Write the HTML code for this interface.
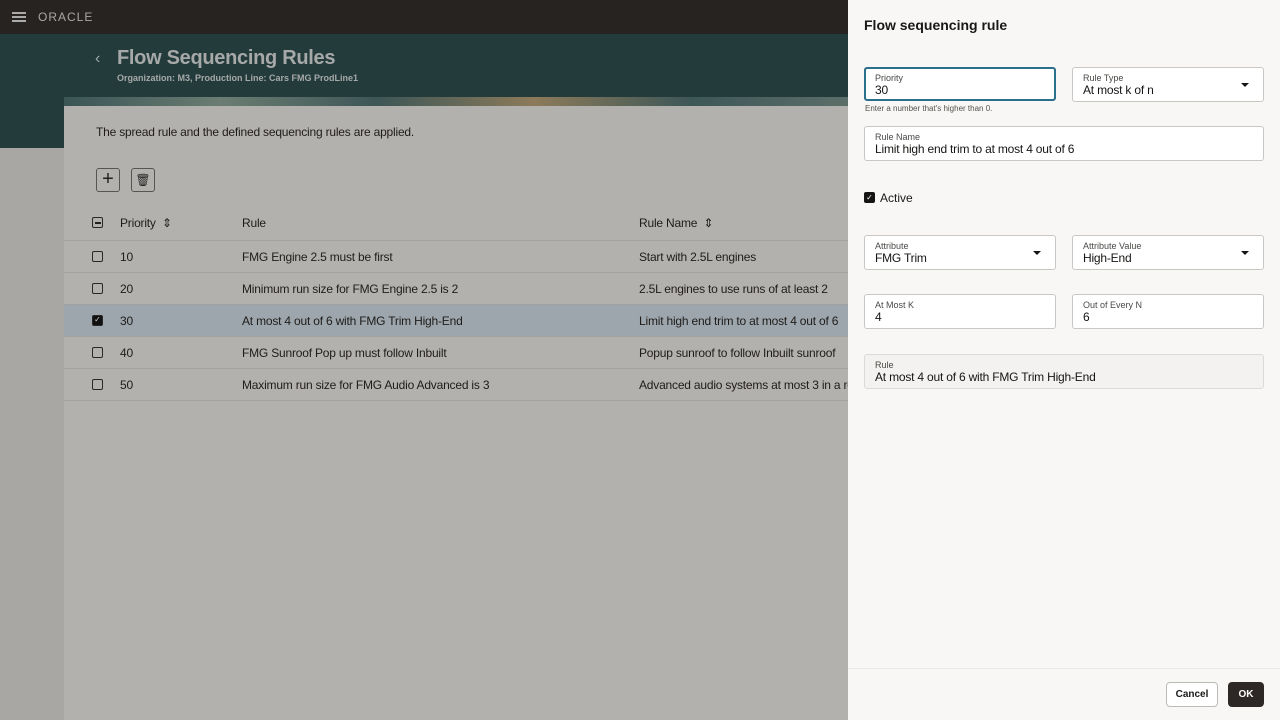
<!DOCTYPE html>
<html><head><meta charset="utf-8"><style>
*{box-sizing:border-box;margin:0;padding:0}
body{width:1280px;height:720px;overflow:hidden;font-family:"Liberation Sans",sans-serif;background:#a9a7a4;position:relative;color:#1a1816}
.top{position:absolute;left:0;top:0;width:848px;height:34px;background:#272320}
.band{position:absolute;left:0;top:34px;width:848px;height:114px;background:#243b3c}
.card{position:absolute;left:64px;top:106px;width:784px;height:614px;background:#b3b1ae}
.deco{position:absolute;left:64px;top:97px;width:784px;height:9px;background:linear-gradient(90deg,#3a5555,#6b7d72 20%,#3d5656 40%,#8c7a5a 60%,#3d5757 80%,#5c6e68)}
.t{position:absolute;font-size:12px;letter-spacing:-0.2px;color:#1f1c1a;white-space:nowrap}
.row{position:absolute;left:64px;width:784px;height:32px;border-top:1px solid #a3a19e}
.cb{position:absolute;width:11px;height:11px;border:1.5px solid #2a2725;border-radius:2px}
.panel{position:absolute;left:848px;top:0;width:432px;height:720px;background:#f8f7f5}
.f{position:absolute;background:#fff;border:1px solid #c9c7c4;border-radius:3px}
.f .l{position:absolute;left:10px;top:5px;font-size:9px;color:#4b4845}
.f .v{position:absolute;left:10px;top:15px;font-size:12px;letter-spacing:-0.2px;color:#161513}
.f .a{position:absolute;right:14px;top:15px;width:0;height:0;border-left:4px solid transparent;border-right:4px solid transparent;border-top:4px solid #161513}
</style></head><body>
<div class="top"></div>
<div style="position:absolute;left:12px;top:12px;width:14px;height:2px;background:#aaa;box-shadow:0 4px 0 #aaa,0 8px 0 #aaa"></div>
<div style="position:absolute;left:38px;top:10px;font-size:12px;color:#a9a7a4;letter-spacing:1px">ORACLE</div>
<div class="band"></div>
<div style="position:absolute;left:95px;top:50px;font-size:16px;color:#9aa;">‹</div>
<div style="position:absolute;left:117px;top:47px;font-size:20px;font-weight:bold;color:#a6a9a8;letter-spacing:-0.3px">Flow Sequencing Rules</div>
<div style="position:absolute;left:117px;top:73px;font-size:9px;font-weight:bold;color:#a6a9a8">Organization: M3, Production Line: Cars FMG ProdLine1</div>
<div class="deco"></div>
<div class="card"></div>
<div class="t" style="left:96px;top:125px;">The spread rule and the defined sequencing rules are applied.</div>
<div style="position:absolute;left:96px;top:168px;width:24px;height:24px;border:1px solid #555;border-radius:3px;font-size:20px;line-height:20px;text-align:center;color:#222">+</div>
<div style="position:absolute;left:131px;top:168px;width:24px;height:24px;border:1px solid #555;border-radius:3px;font-size:12px;line-height:22px;text-align:center;color:#222">🗑</div>
<div class="cb" style="left:92px;top:217px"></div><div style="position:absolute;left:95px;top:222px;width:6px;height:1.5px;background:#222"></div>
<div class="t" style="left:120px;top:216px">Priority &nbsp;⇕</div>
<div class="t" style="left:242px;top:216px">Rule</div>
<div class="t" style="left:639px;top:216px">Rule Name &nbsp;⇕</div>
<div class="row" style="top:240px"></div><div class="row" style="top:272px"></div>
<div class="row" style="top:304px;background:#9ca6ac"></div>
<div class="row" style="top:336px"></div><div class="row" style="top:368px"></div><div class="row" style="top:400px;height:1px"></div>
<div class="cb" style="left:92px;top:251px"></div><div class="t" style="left:120px;top:250px">10</div><div class="t" style="left:242px;top:250px">FMG Engine 2.5 must be first</div><div class="t" style="left:639px;top:250px">Start with 2.5L engines</div>
<div class="cb" style="left:92px;top:283px"></div><div class="t" style="left:120px;top:282px">20</div><div class="t" style="left:242px;top:282px">Minimum run size for FMG Engine 2.5 is 2</div><div class="t" style="left:639px;top:282px">2.5L engines to use runs of at least 2</div>
<div class="cb" style="left:92px;top:315px;background:#111;color:#ccc;font-size:8px;line-height:8px;text-align:center">✓</div><div class="t" style="left:120px;top:314px">30</div><div class="t" style="left:242px;top:314px">At most 4 out of 6 with FMG Trim High-End</div><div class="t" style="left:639px;top:314px">Limit high end trim to at most 4 out of 6</div>
<div class="cb" style="left:92px;top:347px"></div><div class="t" style="left:120px;top:346px">40</div><div class="t" style="left:242px;top:346px">FMG Sunroof Pop up must follow Inbuilt</div><div class="t" style="left:639px;top:346px">Popup sunroof to follow Inbuilt sunroof</div>
<div class="cb" style="left:92px;top:379px"></div><div class="t" style="left:120px;top:378px">50</div><div class="t" style="left:242px;top:378px">Maximum run size for FMG Audio Advanced is 3</div><div class="t" style="left:639px;top:378px">Advanced audio systems at most 3 in a row</div>

<div class="panel">
<div style="position:absolute;left:16px;top:17px;font-size:14px;font-weight:bold">Flow sequencing rule</div>
<div class="f" style="left:16px;top:67px;width:192px;height:34px;border:2px solid #2a6f8c"><div class="l" style="left:9px;top:4px">Priority</div><div class="v" style="left:9px;top:14px">30</div></div>
<div style="position:absolute;left:17px;top:104px;font-size:8px;color:#55524f">Enter a number that's higher than 0.</div>
<div class="f" style="left:224px;top:67px;width:192px;height:35px"><div class="l">Rule Type</div><div class="v">At most k of n</div><div class="a"></div></div>
<div class="f" style="left:16px;top:126px;width:400px;height:35px"><div class="l">Rule Name</div><div class="v">Limit high end trim to at most 4 out of 6</div></div>
<div style="position:absolute;left:16px;top:192px;width:11px;height:11px;background:#161513;border-radius:2px;color:#fff;font-size:8px;line-height:11px;text-align:center">✓</div>
<div style="position:absolute;left:32px;top:191px;font-size:12px">Active</div>
<div class="f" style="left:16px;top:235px;width:192px;height:35px"><div class="l">Attribute</div><div class="v">FMG Trim</div><div class="a"></div></div>
<div class="f" style="left:224px;top:235px;width:192px;height:35px"><div class="l">Attribute Value</div><div class="v">High-End</div><div class="a"></div></div>
<div class="f" style="left:16px;top:294px;width:192px;height:35px"><div class="l">At Most K</div><div class="v">4</div></div>
<div class="f" style="left:224px;top:294px;width:192px;height:35px"><div class="l">Out of Every N</div><div class="v">6</div></div>
<div class="f" style="left:16px;top:354px;width:400px;height:35px;background:#f3f2f0;border-color:#dcdad7"><div class="l">Rule</div><div class="v">At most 4 out of 6 with FMG Trim High-End</div></div>
<div style="position:absolute;left:0;top:668px;width:432px;height:1px;background:#eceae7"></div>
<div style="position:absolute;left:318px;top:682px;width:52px;height:25px;border:1px solid #bdbbb8;border-radius:4px;background:#fff;font-size:10px;font-weight:bold;text-align:center;line-height:23px">Cancel</div>
<div style="position:absolute;left:380px;top:682px;width:36px;height:25px;border-radius:4px;background:#2d2825;color:#fff;font-size:10px;font-weight:bold;text-align:center;line-height:25px">OK</div>
</div>
</body></html>
